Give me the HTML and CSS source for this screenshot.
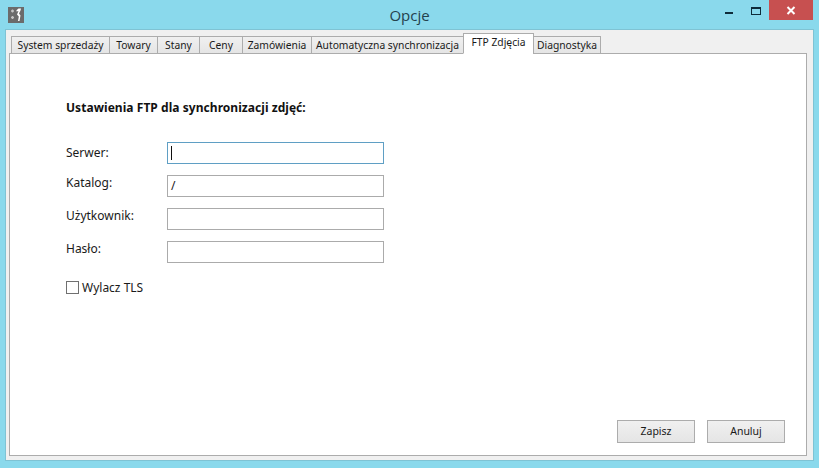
FILE: index.html
```html
<!DOCTYPE html>
<html lang="pl">
<head>
<meta charset="utf-8">
<title>Opcje</title>
<link rel="stylesheet" href="styles.css">
</head>
<body>
<div class="window">
  <header class="titlebar">
    <svg class="app-icon" width="16" height="16" viewBox="0 0 16 16">
      <rect width="16" height="16" fill="#6b6b6b"/>
      <path d="M3 4h3M4.500 2.500v3M3 10.500h3M4.500 9v3" stroke="#c4c4c4" stroke-width="1.300" fill="none"/>
      <path d="M10.500 1.500h2.500l-.5 2-1.500 3 1.500 2-1 5.500h-1.500l.8-4.500-1.800-2 1.500-3.500-2 .5v-1.300z" fill="#fff"/>
    </svg>
    <div class="title">Opcje</div>
    <div class="controls">
      <div class="ctl"><span class="min"></span></div>
      <div class="ctl"><span class="max"></span></div>
      <div class="close">
        <svg width="10" height="9" viewBox="0 0 10 9"><path d="M1.500 1l7 7M8.500 1l-7 7" stroke="#fff" stroke-width="2" fill="none"/></svg>
      </div>
    </div>
  </header>
  <main class="client">
    <nav class="tabs">
      <div class="tab t1">System sprzedaży</div>
      <div class="tab t2">Towary</div>
      <div class="tab t3">Stany</div>
      <div class="tab t4">Ceny</div>
      <div class="tab t5">Zamówienia</div>
      <div class="tab t6">Automatyczna synchronizacja</div>
      <div class="tab active">FTP Zdjęcia</div>
      <div class="tab t8">Diagnostyka</div>
    </nav>
    <section class="pane">
      <h1 class="heading">Ustawienia FTP dla synchronizacji zdjęć:</h1>
      <div class="form">
        <div class="row"><label class="label l1">Serwer:</label><div class="input focus"><span class="caret"></span></div></div>
        <div class="row"><label class="label l2">Katalog:</label><div class="input">/</div></div>
        <div class="row"><label class="label l3">Użytkownik:</label><div class="input"></div></div>
        <div class="row"><label class="label l3">Hasło:</label><div class="input"></div></div>
      </div>
      <div class="check"><span class="box"></span><span>Wylacz TLS</span></div>
      <div class="actions">
        <div class="btn">Zapisz</div>
        <div class="btn">Anuluj</div>
      </div>
    </section>
  </main>
</div>
</body>
</html>
```
FILE: styles.css
```css
* { box-sizing: border-box; }
html, body { margin: 0; height: 100%; }
body { background: #8ad9ec; font-family: "Noto Sans", sans-serif; font-size: 12px; color: #1a1a1a; overflow: hidden; }
.window { width: 819px; height: 468px; padding: 0 6px 8px 6px; display: flex; flex-direction: column; }
.titlebar { height: 30px; position: relative; flex: none; }
.app-icon { position: absolute; left: 2px; top: 7px; }
.title { text-align: center; font-family: "Open Sans", sans-serif; font-size: 15px; line-height: 30px; color: #24424d; }
.controls { position: absolute; right: 0; top: 0; display: flex; }
.ctl { height: 20px; position: relative; }
.ctl:nth-child(1) { width: 26px; }
.ctl:nth-child(2) { width: 24px; }
.min { position: absolute; left: 6px; top: 12px; width: 8px; height: 2px; background: #0e2c3a; }
.max { position: absolute; left: 6px; top: 7px; width: 10px; height: 8px; border: 1px solid #0e2c3a; border-top-width: 2px; }
.close { width: 44px; height: 20px; background: #c75050; display: flex; align-items: center; justify-content: center; }
.client { flex: 1; background: #f0f0f0; box-shadow: 0 0 0 1px #7fc3d4; padding: 3px 6px 4px 3px; display: flex; flex-direction: column; min-height: 0; }
.tabs { display: flex; height: 21px; padding-left: 2px; align-items: flex-end; flex: none; position: relative; z-index: 1; margin-bottom: -1px; font-size: 10.300px; }
.tab { height: 18px; line-height: 17px; padding: 0; text-align: center; border: 1px solid #acacac; margin-right: -1px; background: linear-gradient(#f0f0f0, #e5e5e5); white-space: nowrap; }
.t1 { width: 99px; }
.t2 { width: 49px; }
.t3 { width: 43px; }
.t4 { width: 44px; }
.t5 { width: 70px; }
.t6 { width: 153px; }
.active { width: 71px; height: 21px; background: #fff; border-bottom-color: #fff; line-height: 17px; }
.t8 { width: 68px; }
.pane { flex: 1; background: #fff; border: 1px solid #acacac; position: relative; padding: 46px 0 0 56px; display: flex; flex-direction: column; min-height: 0; }
.heading { margin: 0; font-size: 12px; letter-spacing: 0.050px; line-height: 16px; font-weight: bold; color: #111; }
.form { display: flex; flex-direction: column; gap: 11px; margin-top: 26px; }
.row { display: flex; align-items: center; height: 22px; }
.label { width: 101px; flex: none; line-height: 14px; }
.l1 { padding-bottom: 1px; }
.l2 { padding-bottom: 6px; }
.l3 { padding-bottom: 7px; }
.input { width: 217px; height: 22px; background: #fff; border: 1px solid #ababab; padding-left: 3px; line-height: 20px; }
.focus { border-color: #5f9fc4; display: flex; align-items: center; }
.caret { width: 1px; height: 14px; background: #111; }
.check { display: flex; align-items: center; gap: 3px; margin-top: 16px; height: 16px; }
.box { width: 13px; height: 13px; background: #fff; border: 1px solid #707070; }
.actions { position: absolute; right: 21px; bottom: 12px; display: flex; gap: 12px; font-size: 10.500px; }
.btn { width: 78px; height: 23px; border: 1px solid #acacac; background: linear-gradient(#f0f0f0, #e5e5e5); text-align: center; line-height: 21px; }
```
